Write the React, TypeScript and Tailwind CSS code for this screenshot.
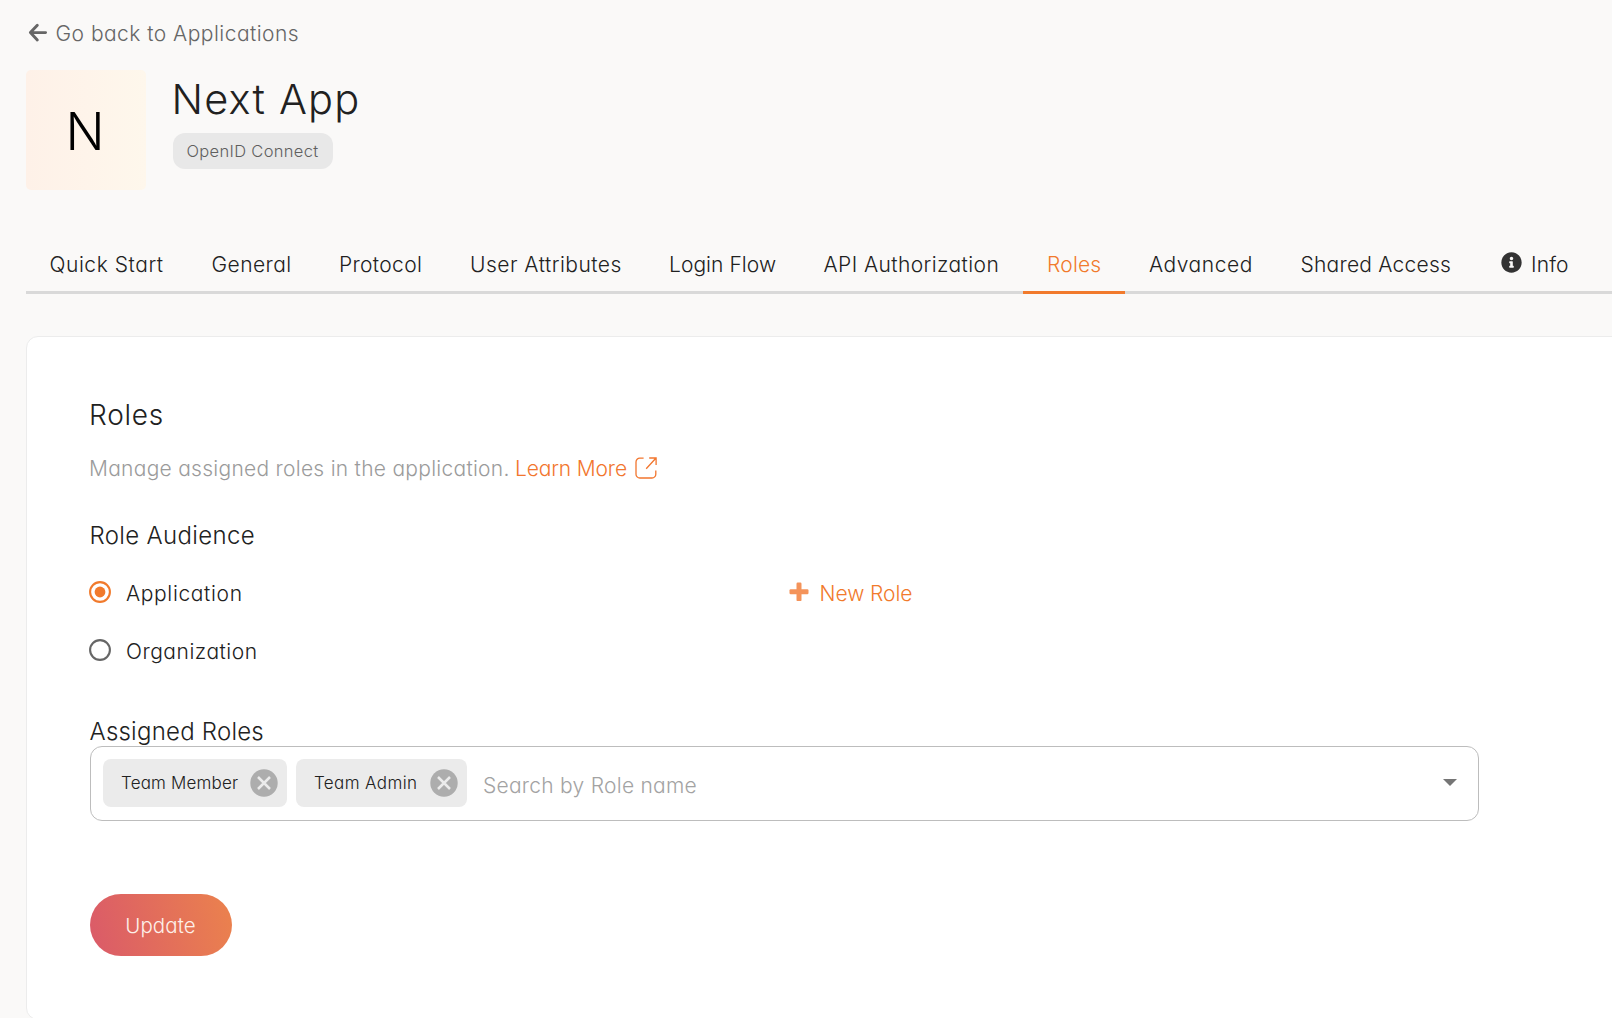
import { useState } from "react";
import { FaInfoCircle } from "react-icons/fa";

const tabs = [
  { label: "Quick Start", box: "w-[162px] pl-[23.5px] tracking-[0.55px]" },
  { label: "General", box: "w-[127px] pl-[23.5px] tracking-[0.45px]" },
  { label: "Protocol", box: "w-[131px] pl-[24px] tracking-[0.34px]" },
  { label: "User Attributes", box: "w-[199px] pl-[24px] tracking-[0.48px]" },
  { label: "Login Flow", box: "w-[155px] pl-[24px] tracking-[0.05px]" },
  { label: "API Authorization", box: "w-[223px] pl-[23.5px] tracking-[0.41px]" },
  { label: "Roles", box: "w-[102px] pl-[24px] tracking-[0.2px]" },
  { label: "Advanced", box: "w-[152px] pl-[24px] tracking-[0.53px]" },
  { label: "Shared Access", box: "w-[198px] pl-[23.5px] tracking-[0.23px]" },
  { label: "Info", box: "w-[140px] pl-[25px] tracking-[0.15px]" },
];

const assigned = [
  { name: "Team Member", box: "w-[184px] tracking-[0.17px]" },
  { name: "Team Admin", box: "w-[171px] tracking-[0.38px]" },
];

function BackIcon() {
  return (
    <svg width="20" height="20" viewBox="0 0 20 20" fill="none" stroke="#666" strokeWidth="2.9" strokeLinecap="round" strokeLinejoin="round" className="ml-[2px] mr-[7.5px] shrink-0">
      <path d="M17.6 9.6H2.6M9.3 2.2L2.4 9.6l6.9 7.3" />
    </svg>
  );
}

function PlusIcon() {
  return (
    <svg width="20" height="20" viewBox="0 0 20 20" fill="#f4935a" className="mr-[11px] shrink-0">
      <rect x="0.5" y="7.2" width="19" height="5" rx="1.2" />
      <rect x="7.5" y="0.5" width="5" height="18.6" rx="1.2" />
    </svg>
  );
}

function ExternalIcon() {
  return (
    <svg width="22" height="22" viewBox="0 0 22 22" fill="none" stroke="#f2762e" strokeWidth="1.3" className="ml-[8.5px] mt-px shrink-0">
      <path d="M8.6 1.2H4.8A3.8 3.8 0 0 0 1 5v12.2A3.8 3.8 0 0 0 4.8 21H17a3.8 3.8 0 0 0 3.8-3.8V13.4" />
      <path d="M14.2 1h6.9v6.9M20.8 1.2l-9.6 10.6" />
    </svg>
  );
}

function Radio({ checked }: { checked: boolean }) {
  return (
    <svg width="22" height="22" viewBox="0 0 22 22" className="-ml-px shrink-0">
      <circle cx="11" cy="11" r="9.9" fill="none" stroke={checked ? "#f17a2c" : "#666"} strokeWidth="2.1" />
      {checked && <circle cx="11" cy="11" r="5.4" fill="#f17a2c" />}
    </svg>
  );
}

function ClearIcon() {
  return (
    <svg width="28" height="28" viewBox="0 0 28 28" className="shrink-0">
      <circle cx="14" cy="14" r="13.7" fill="#adadad" />
      <path d="M8 8l12 12M20 8L8 20" stroke="#ebebeb" strokeWidth="2.5" />
    </svg>
  );
}

export default function App() {
  const [audience, setAudience] = useState("Application");

  return (
    <div className="h-[1018px] w-full overflow-hidden bg-[#faf9f8] pl-[26px] pt-4 font-[Inter,sans-serif] text-[21px] font-[350] leading-none text-[#212121] [font-feature-settings:'cv11']">
      <a className="flex h-[33px] items-center whitespace-nowrap tracking-[0.47px] text-[#666]">
        <BackIcon />
        <span className="pt-px">Go back to Applications</span>
      </a>

      <header className="mt-[21px] flex h-[120px]">
        <div className="flex size-[120px] items-center justify-center rounded-[5px] bg-linear-to-r from-[#fef1e8] to-[#fef7ec] pr-[2px] pt-[4px] text-[51.5px] text-black">
          N
        </div>
        <div className="ml-[27px]">
          <h1 className="-ml-[1.5px] flex h-[57px] items-center whitespace-nowrap pt-[2px] text-[41.5px] tracking-[1.2px]">Next App</h1>
          <span className="mt-[6px] flex h-9 w-[160px] items-center justify-center whitespace-nowrap rounded-[12px] bg-[#e8e8e8] pr-px text-[16.5px] tracking-[0.32px] text-[#5f5f5f]">
            OpenID Connect
          </span>
        </div>
      </header>

      <nav className="mt-[44px] flex h-[60px] w-[1640px] border-b-[3px] border-[#d9d9d9]">
        {tabs.map((t) => (
          <button
            key={t.label}
            className={`flex h-[60px] shrink-0 items-center whitespace-nowrap border-b-[3px] pt-[4px] ${t.box} ${
              t.label === "Roles" ? "border-[#f17a2c] text-[#f17a2c]" : "border-transparent"
            }`}
          >
            {t.label === "Info" && <FaInfoCircle className="-mt-[5px] ml-[1px] mr-[9px] size-[21px] text-[#333]" />}
            {t.label}
          </button>
        ))}
      </nav>

      <main className="mt-[42px] h-[684px] w-[1640px] rounded-[12px] border border-[#ececec] bg-white pl-[63px] pt-[60px]">
        <h2 className="-ml-[1px] flex h-[34px] items-center pt-[2px] text-[28px] tracking-[0.75px]">Roles</h2>
        <p className="-ml-[1px] mt-[22px] flex h-[29px] items-center whitespace-nowrap text-[#9b9b9b]">
          <span className="w-[426px] pt-[2px] tracking-[0.27px]">Manage assigned roles in the application.</span>
          <a className="flex items-center tracking-[-0.15px] text-[#f2762e]">
            <span className="pt-[2px]">Learn More</span>
            <ExternalIcon />
          </a>
        </p>

        <h3 className="-ml-[0.5px] mt-[38px] flex h-[30px] items-center pt-px text-[24px] tracking-[0.33px]">Role Audience</h3>
        <div className="mt-[22px] flex">
          <div className="flex w-[698.5px] flex-col gap-[18px]">
            <label className="flex h-10 items-center gap-[15px] tracking-[0.64px]">
              <Radio checked={audience === "Application"} />
              <span className="pt-[2px]" onClick={() => setAudience("Application")}>Application</span>
            </label>
            <label className="flex h-10 items-center gap-[15px] tracking-[0.52px]">
              <Radio checked={audience === "Organization"} />
              <span className="pt-[2px]" onClick={() => setAudience("Organization")}>Organization</span>
            </label>
          </div>
          <button className="flex h-10 items-center whitespace-nowrap tracking-[-0.05px] text-[#f17a2c]">
            <PlusIcon />
            <span className="pt-[2px]">New Role</span>
          </button>
        </div>

        <h3 className="-ml-[0.5px] mt-[46px] flex h-[30px] items-center pt-px text-[24px] tracking-[0.23px]">Assigned Roles</h3>
        <div className="flex h-[75px] w-[1389px] items-center rounded-[12px] border border-[#bdbdbd] pl-3">
          {assigned.map((r) => (
            <div
              key={r.name}
              className={`mb-px mr-[9px] flex h-12 shrink-0 items-center justify-between whitespace-nowrap rounded-[8px] bg-[#ebebeb] pl-[18px] pr-[9.5px] text-[17px] ${r.box}`}
            >
              {r.name}
              <ClearIcon />
            </div>
          ))}
          <span className="ml-[7px] grow whitespace-nowrap pt-[3px] tracking-[0.26px] text-[#a3a3a3]">Search by Role name</span>
          <svg width="14" height="7" viewBox="0 0 14 7" className="mb-[3px] mr-[21.5px]">
            <path d="M0 0h14L7 7z" fill="#757575" />
          </svg>
        </div>

        <button className="mt-[73px] flex h-[62px] w-[142px] items-center justify-center rounded-full bg-[linear-gradient(77deg,#da5a69,#eb824d)] pr-px pt-[2px] text-[20.5px] font-[300] tracking-[0.1px] text-[#fdf0ea]">
          Update
        </button>
      </main>
    </div>
  );
}
